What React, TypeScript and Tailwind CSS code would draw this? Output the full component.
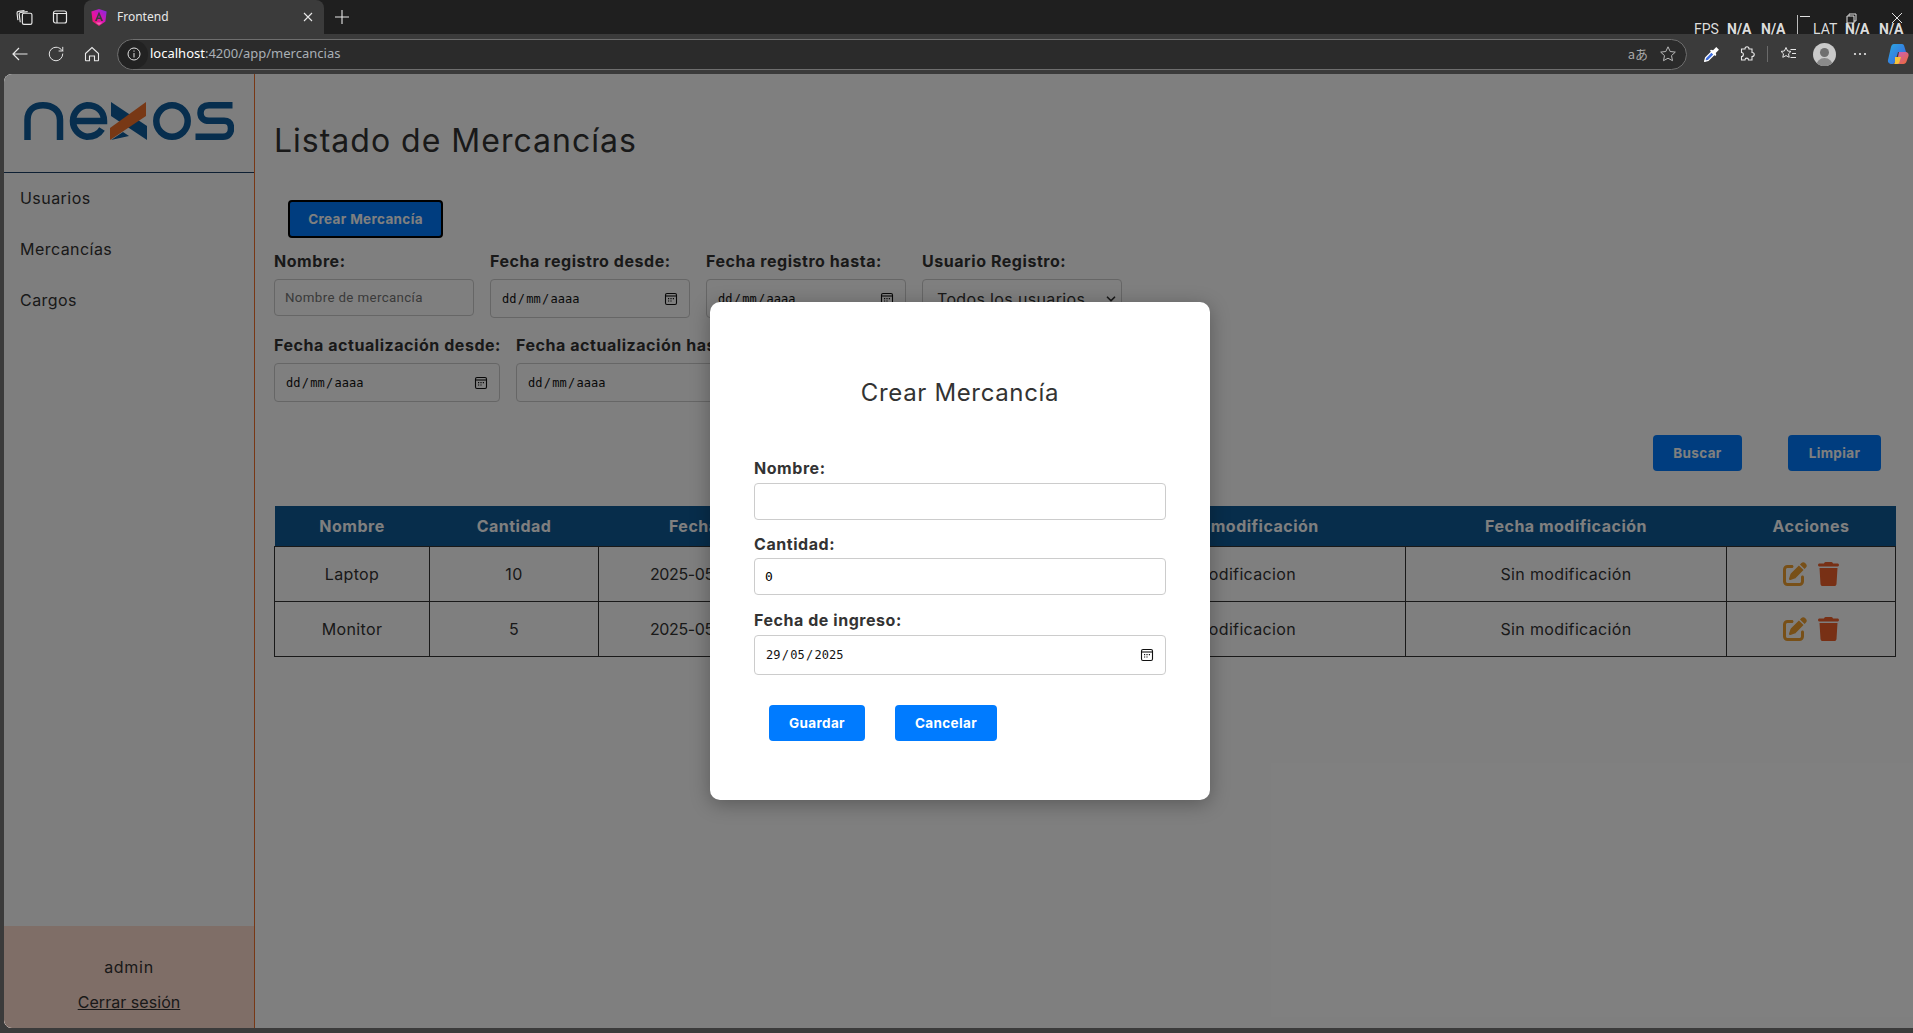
import { Fragment } from 'react'
import { ChevronDown, RotateCw } from 'lucide-react'
import { FaPenToSquare, FaTrash } from 'react-icons/fa6'

const rows = [
  { nombre: 'Laptop', cantidad: '10' },
  { nombre: 'Monitor', cantidad: '5' },
]

const headers = [
  'Nombre',
  'Cantidad',
  'Fecha de ingreso',
  'Usuario registro',
  'Usuario modificación',
  'Fecha modificación',
  'Acciones',
]

const widths = [155, 169, 282, 175, 350, 321, 169]

function ChromeIcon({ children }: { children: React.ReactNode }) {
  return <div className="flex h-9 w-9 shrink-0 items-center justify-center text-[#e8e8e8]">{children}</div>
}

function AngularIcon() {
  return (
    <svg width="16" height="17" viewBox="0 0 16 17">
      <defs>
        <linearGradient id="ng" x1="0" y1="1" x2="1" y2="0">
          <stop offset="0" stopColor="#f0204f" />
          <stop offset="0.45" stopColor="#e412a8" />
          <stop offset="1" stopColor="#7a2be6" />
        </linearGradient>
      </defs>
      <path d="M8 0 15.600 2.600 14.400 12.500 8 17 1.600 12.500 .4 2.600Z" fill="url(#ng)" />
      <path d="M8 2.500 4 12h1.800l.8-2h2.800l.8 2H12ZM7.100 8.600 8 6.300l.9 2.300Z" fill="#3b3b3b" />
      <path d="M4.500 13.500h7L8 16Z" fill="#fff" opacity="0.35" />
    </svg>
  )
}

function CopilotIcon() {
  return (
    <svg width="22" height="22" viewBox="0 0 22 22">
      <defs>
        <linearGradient id="cp1" x1="0" y1="0" x2="1" y2="1">
          <stop offset="0" stopColor="#2ba8e0" />
          <stop offset="1" stopColor="#3b5fe0" />
        </linearGradient>
        <linearGradient id="cp2" x1="0" y1="0" x2="1" y2="1">
          <stop offset="0" stopColor="#c45fd0" />
          <stop offset="1" stopColor="#f0692e" />
        </linearGradient>
      </defs>
      <path d="M7 1h8c1.500 0 2 1 2.500 3L19 9H11L8 19c-.5 1.500-1.500 2-3 2-3 0-4.500-2-4-4L4 4C4.500 2 5.500 1 7 1Z" fill="url(#cp1)" />
      <path d="M12 9h6c3 0 4 2 3.500 4l-2 5.500C19 20 18 21 16.500 21H7c1.500 0 2.500-.5 3-2Z" fill="url(#cp2)" />
      <path d="M8 14h6l-1.500 5c-.3 1-1 2-2.500 2H6c1.500 0 1.700-1 2-2Z" fill="#f5c23a" />
    </svg>
  )
}

function BrowserBar() {
  return (
    <div className="relative shrink-0 font-['Noto_Sans',sans-serif] tracking-normal text-[#e8e8e8]">
      <div className="flex h-[34px] items-center bg-[#1f1f1f] pl-[6px]">
        <ChromeIcon>
          <svg width="17" height="17" viewBox="0 0 16 16" fill="none" stroke="currentColor" strokeWidth="1.100">
            <rect x="6" y="4" width="9" height="10.500" rx="1.500" />
            <path d="M4 12.500 3 5c-.1-1 .4-1.600 1.300-1.700L11 2.500M1.800 10.500 1 4c-.1-1 .4-1.600 1.300-1.700L8 1.500" />
          </svg>
        </ChromeIcon>
        <ChromeIcon>
          <svg width="16" height="16" viewBox="0 0 16 16" fill="none" stroke="currentColor" strokeWidth="1.200">
            <rect x="1.500" y="2" width="13" height="12" rx="2" />
            <path d="M1.500 4.500h13M5 4.500V14" />
          </svg>
        </ChromeIcon>
        <div className="ml-[6px] flex h-[34px] w-[240px] items-center rounded-t-[8px] bg-[#3b3b3b] pl-[7px]">
          <AngularIcon />
          <span className="ml-[10px] flex-1 text-[12px]">Frontend</span>
          <svg className="mr-[11px]" width="10" height="10" viewBox="0 0 10 10" stroke="currentColor" strokeWidth="1.100">
            <path d="M1 1 9 9M9 1 1 9" />
          </svg>
        </div>
        <ChromeIcon>
          <svg width="14" height="14" viewBox="0 0 14 14" stroke="currentColor" strokeWidth="1.100">
            <path d="M7 0v14M0 7h14" />
          </svg>
        </ChromeIcon>
      </div>

      {/* fps overlay + window buttons */}
      <div className="absolute left-[1694px] top-[21px] flex h-[15px] items-center font-['Roboto',sans-serif] text-[14px] leading-none text-[#dcdcdc]">
        <span className="w-[33px]">FPS</span>
        <span className="w-[34px] font-bold">N/A</span>
        <span className="w-[36px] font-bold">N/A</span>
        <span className="-mt-[8px] h-[19px] w-[16px] border-l border-[#bbbbbb]" />
        <span className="w-[32px]">LAT</span>
        <span className="w-[34px] font-bold">N/A</span>
        <span className="font-bold">N/A</span>
      </div>
      <svg className="absolute left-[1800px] top-[12px]" width="104" height="12" viewBox="0 0 104 12" fill="none" stroke="#e0e0e0" strokeWidth="1">
        <path d="M0 4.500h10M47 4h7v7h-7zM49 4V2h7v7h-2M92 1l10 10M102 1 92 11" />
      </svg>

      <div className="flex h-[40px] items-center overflow-hidden bg-[#3b3b3b] pl-[2px]">
        <ChromeIcon>
          <svg width="16" height="16" viewBox="0 0 16 16" fill="none" stroke="currentColor" strokeWidth="1.200">
            <path d="M15.500 8H1M7 2 1 8l6 6" />
          </svg>
        </ChromeIcon>
        <ChromeIcon>
          <RotateCw className="h-[18px] w-[18px]" strokeWidth={1.3} />
        </ChromeIcon>
        <ChromeIcon>
          <svg width="16" height="16" viewBox="0 0 16 16" fill="none" stroke="currentColor" strokeWidth="1.100">
            <path d="M1.500 7.500 8 1.500l6.500 6V14a.7.7 0 0 1-.7.7H10.500V10h-5v4.700H2.200a.7.7 0 0 1-.7-.7Z" />
          </svg>
        </ChromeIcon>
        <div className="ml-[7px] flex h-[31px] w-[1570px] shrink-0 items-center rounded-full border border-[#6e6e6e] bg-[#2b2b2b]">
          <div className="ml-[1px] flex h-[29px] w-[29px] items-center justify-center rounded-full bg-[#222222]">
            <svg width="14" height="14" viewBox="0 0 14 14" fill="none" stroke="#e0e0e0" strokeWidth="1">
              <circle cx="7" cy="7" r="6" />
              <path d="M7 6v4.500M7 3.500v1.200" />
            </svg>
          </div>
          <span className="ml-[2px] text-[13px] text-[#a9b0b6]">
            <span className="text-white">localhost</span>:4200/app/mercancias
          </span>
          <span className="ml-auto mr-[12px] font-['Noto_Sans_CJK_JP','Noto_Sans',sans-serif] text-[13px] text-[#a8a8a8]">aあ</span>
          <svg className="mr-[10px]" width="16" height="16" viewBox="0 0 16 16" fill="none" stroke="#b8b8b8" strokeWidth="1">
            <path d="M8 .8 10.200 5.500l5.100.6-3.800 3.500 1 5.100L8 12.200l-4.500 2.500 1-5.100L.7 6.100l5.100-.6Z" />
          </svg>
        </div>
        <div className="ml-[6px]" />
        <ChromeIcon>
          <svg width="17" height="17" viewBox="0 0 16 16">
            <path d="M1.500 14.500 2.500 11 8 5.500l2.500 2.500L5 13.500Z" fill="#3f6fe0" stroke="#fff" strokeWidth="1.200" strokeLinejoin="round" />
            <path d="M7.500 3.500 9.500 4l3-3 2.500 2.500-3 3 .5 2-1 1L6.500 4.500Z" fill="#fff" />
          </svg>
        </ChromeIcon>
        <ChromeIcon>
          <svg width="16" height="16" viewBox="0 0 16 16" fill="none" stroke="currentColor" strokeWidth="1.100">
            <path d="M6 3c0-3 4-3 4 0h3v3.500c3 0 3 4 0 4V14H9.500c0-2.500-3.500-2.500-3.500 0H2.500v-3.500c2.500 0 2.500-4 0-4V3Z" />
          </svg>
        </ChromeIcon>
        <div className="ml-[2px] h-[16px] w-px shrink-0 bg-[#6a6a6a]" />
        <div className="ml-[2px]" />
        <ChromeIcon>
          <svg width="17" height="16" viewBox="0 0 17 16" fill="none" stroke="currentColor" strokeWidth="1">
            <path d="M6 1.500 7.600 5l3.400.4-2.500 2.400.7 3.500L6 9.600l-3.200 1.700.7-3.500L1 5.400 4.400 5ZM10.500 3.500H16M12 7.500h4M10.500 11.500H16" />
          </svg>
        </ChromeIcon>
        <ChromeIcon>
          <div className="relative h-[23px] w-[23px] overflow-hidden rounded-full bg-[#c9c9c9]">
            <div className="mx-auto mt-[5px] h-[9px] w-[9px] rounded-full bg-[#6f6f6f]" />
            <div className="mx-auto mt-[1px] h-[10px] w-[17px] rounded-t-full bg-[#8a8a8a]" />
          </div>
        </ChromeIcon>
        <ChromeIcon>
          <svg width="14" height="4" viewBox="0 0 14 4" fill="currentColor">
            <circle cx="2" cy="2" r="1.100" />
            <circle cx="7" cy="2" r="1.100" />
            <circle cx="12" cy="2" r="1.100" />
          </svg>
        </ChromeIcon>
        <div className="ml-[2px]" />
        <ChromeIcon>
          <CopilotIcon />
        </ChromeIcon>
      </div>
    </div>
  )
}

function NexosLogo() {
  return (
    <svg width="210" height="38" viewBox="0 0 210 38" fill="none">
      <g stroke="#0e5c9c" strokeWidth="6.500">
        <path d="M3.500 38V18C3.500 8 10 3.300 19 3.300S36 8 36 18V38" />
        <path d="M46 19H80C80 9 73 3.300 63 3.300A15.800 15.800 0 0 0 63 34.700C70 34.700 75 32 78 27" />
        <circle cx="148" cy="19" r="15.700" />
        <path d="M208.500 3.300H185C180 3.300 176.500 6 176.500 11S180 18.800 185 18.800H200C205 18.800 207 21.500 207 26.500S204 34.700 199 34.700H171.500" />
      </g>
      <path d="M87 0 123 24V38L87 14ZM87 38 99 30 105 34 87 38Z" fill="#0e5c9c" />
      <path d="M86 26 122 0V14L86 38Z" fill="#f0702a" />
    </svg>
  )
}

function Sidebar() {
  return (
    <aside className="flex w-[251px] shrink-0 flex-col border-r border-[#f0702a] bg-[#fcfcfc] text-[#333333]">
      <div className="flex h-[99px] shrink-0 items-start border-b border-[#1a3f66] pl-[20px] pt-[28px]">
        <NexosLogo />
      </div>
      <nav className="-mt-px flex flex-col">
        {['Usuarios', 'Mercancías', 'Cargos'].map((item) => (
          <a key={item} className="flex h-[51px] items-center pl-[16px] tracking-[0.45px]">
            {item}
          </a>
        ))}
      </nav>
      <div className="mt-auto flex h-[102px] flex-col items-center bg-[#ffdccf] pt-[29px]">
        <span className="leading-[24px] tracking-[0.7px]">admin</span>
        <a className="mt-[11px] leading-[24px] tracking-[0.05px] underline">Cerrar sesión</a>
      </div>
    </aside>
  )
}

function DateIcon() {
  return (
    <svg width="14" height="14" viewBox="0 0 14 14" fill="none" stroke="currentColor" strokeWidth="1.100">
      <rect x="1.500" y="1.500" width="11" height="11" rx="1.500" />
      <path d="M1.500 4h11" />
      <path d="M4 6.700h1.200M6.400 6.700h1.200M8.800 6.700H10M4 9h1.200M6.400 9h1.200" strokeWidth="1.200" />
    </svg>
  )
}

function DateField({ value = 'dd/mm/aaaa' }: { value?: string }) {
  return (
    <div className="flex h-full items-center justify-between pl-[11px] pr-[11px] font-['DejaVu_Sans_Mono',monospace] text-[12px] tracking-normal text-[#111111]">
      <span>
        {value.split('/').map((part, i) => (
          <Fragment key={i}>
            {i > 0 && <span className="mx-[1.3px]">/</span>}
            {part}
          </Fragment>
        ))}
      </span>
      <DateIcon />
    </div>
  )
}

function FilterLabel({ children }: { children: React.ReactNode }) {
  return <label className="block h-[24px] whitespace-nowrap font-bold leading-[24px] tracking-[0.55px] text-[#333333]">{children}</label>
}

function Filters() {
  const box = 'mt-[6px] rounded-[4px] border border-[#cccccc]'
  return (
    <div className="mt-[11px]">
      <div className="flex gap-[16px]">
        <div className="w-[200px]">
          <FilterLabel>Nombre:</FilterLabel>
          <input
            placeholder="Nombre de mercancía"
            className={`${box} h-[37px] w-full px-[10px] font-['Roboto',sans-serif] text-[13.33px] outline-none placeholder:text-[#757575]`}
          />
        </div>
        <div className="w-[200px]">
          <FilterLabel>Fecha registro desde:</FilterLabel>
          <div className={`${box} h-[39px]`}>
            <DateField />
          </div>
        </div>
        <div className="w-[200px]">
          <FilterLabel>Fecha registro hasta:</FilterLabel>
          <div className={`${box} h-[39px]`}>
            <DateField />
          </div>
        </div>
        <div className="w-[200px]">
          <FilterLabel>Usuario Registro:</FilterLabel>
          <div className={`${box} flex h-[39px] items-center justify-between pl-[14px] pr-[3px] text-[#333333]`}>
            <span>Todos los usuarios</span>
            <ChevronDown className="h-[14px] w-[14px]" strokeWidth={3} />
          </div>
        </div>
      </div>
      <div className="mt-[15px] flex gap-[16px]">
        <div className="w-[226px]">
          <FilterLabel>Fecha actualización desde:</FilterLabel>
          <div className={`${box} h-[39px]`}>
            <DateField />
          </div>
        </div>
        <div className="w-[226px]">
          <FilterLabel>Fecha actualización hasta:</FilterLabel>
          <div className={`${box} h-[39px]`}>
            <DateField />
          </div>
        </div>
      </div>
    </div>
  )
}

function DataTable() {
  return (
    <table className="mt-[35px] w-[1621px] table-fixed border-collapse text-center text-[#333333]">
      <colgroup>
        {widths.map((w, i) => (
          <col key={i} style={{ width: w }} />
        ))}
      </colgroup>
      <thead>
        <tr className="h-[40px] bg-[#0f5a96] text-white">
          {headers.map((h) => (
            <th key={h} className="font-bold tracking-[0.5px]">
              {h}
            </th>
          ))}
        </tr>
      </thead>
      <tbody>
        {rows.map((r) => (
          <tr key={r.nombre} className="h-[55px]">
            <td className="border border-[#333333]">{r.nombre}</td>
            <td className="border border-[#333333]">{r.cantidad}</td>
            <td className="border border-[#333333] tracking-[-0.35px]">2025-05-29T00:00:00.0</td>
            <td className="border border-[#333333]">admin</td>
            <td className="border border-[#333333]">Sin modificacion</td>
            <td className="border border-[#333333]">Sin modificación</td>
            <td className="border border-[#333333]">
              <div className="flex items-center justify-center gap-[11px]">
                <FaPenToSquare className="h-[24px] w-[24px] text-[#f0a030]" />
                <FaTrash className="h-[24px] w-[21px] text-[#f0602a]" />
              </div>
            </td>
          </tr>
        ))}
      </tbody>
    </table>
  )
}

function ModalField({ label, children }: { label: string; children: React.ReactNode }) {
  return (
    <div>
      <label className="block h-[24px] font-bold leading-[24px] tracking-[0.55px] text-[#333333]">{label}</label>
      {children}
    </div>
  )
}

function Modal() {
  const input = 'h-[37px] w-full rounded-[4px] border border-[#cccccc] px-[10px] outline-none'
  return (
    <div className="h-[498px] w-[500px] rounded-[10px] bg-white px-[44px] pt-[74px] shadow-[0_4px_20px_rgba(0,0,0,0.3)]">
      <h2 className="text-center text-[24px] leading-[34px] tracking-[0.65px] text-[#333333]">Crear Mercancía</h2>
      <div className="mt-[46px] flex flex-col">
        <ModalField label="Nombre:">
          <input className={`${input} mt-[3px]`} />
        </ModalField>
        <div className="mt-[12px]">
          <ModalField label="Cantidad:">
            <input
              className={`${input} mt-[2px] font-['DejaVu_Sans_Mono',monospace] text-[13px] tracking-normal text-black`}
              defaultValue="0"
            />
          </ModalField>
        </div>
        <div className="mt-[13px]">
          <ModalField label="Fecha de ingreso:">
            <div className="mt-[3px] h-[40px] rounded-[4px] border border-[#cccccc]">
              <DateField value="29/05/2025" />
            </div>
          </ModalField>
        </div>
      </div>
      <div className="ml-[15px] mt-[30px] flex gap-[30px]">
        <button className="h-[36px] w-[96px] rounded-[4px] bg-[#007bff] text-[13.5px] font-bold text-white">Guardar</button>
        <button className="h-[36px] w-[102px] rounded-[4px] bg-[#007bff] text-[13.5px] font-bold text-white">Cancelar</button>
      </div>
    </div>
  )
}

export default function App() {
  return (
    <div className="flex h-screen w-full flex-col overflow-hidden bg-[#3b3b3b] font-['Inter',sans-serif] text-[16px] tracking-[0.35px]">
      <BrowserBar />
      <div className="min-h-0 flex-1 pb-[5px] pl-[4px]">
        <div className="relative flex h-full overflow-hidden rounded-l-[8px] bg-white">
          <Sidebar />
          <main className="min-w-0 flex-1 pl-[19px] pt-[48px]">
            <h1 className="text-[32px] leading-[38px] tracking-[1px] text-[#333333]">Listado de Mercancías</h1>
            <button className="ml-[14px] mt-[40px] block h-[38px] w-[155px] rounded-[4px] border-2 border-black bg-[#007bff] text-[13.5px] font-bold text-white">
              Crear Mercancía
            </button>
            <Filters />
            <div className="mr-[32px] mt-[33px] flex justify-end gap-[46px]">
              <button className="h-[36px] w-[89px] rounded-[4px] bg-[#007bff] text-[13.5px] font-bold text-white">Buscar</button>
              <button className="h-[36px] w-[93px] rounded-[4px] bg-[#007bff] text-[13.5px] font-bold text-white">Limpiar</button>
            </div>
            <DataTable />
          </main>
          <div className="absolute inset-0 flex items-center justify-center bg-black/50 pl-[3px]">
            <Modal />
          </div>
        </div>
      </div>
    </div>
  )
}
